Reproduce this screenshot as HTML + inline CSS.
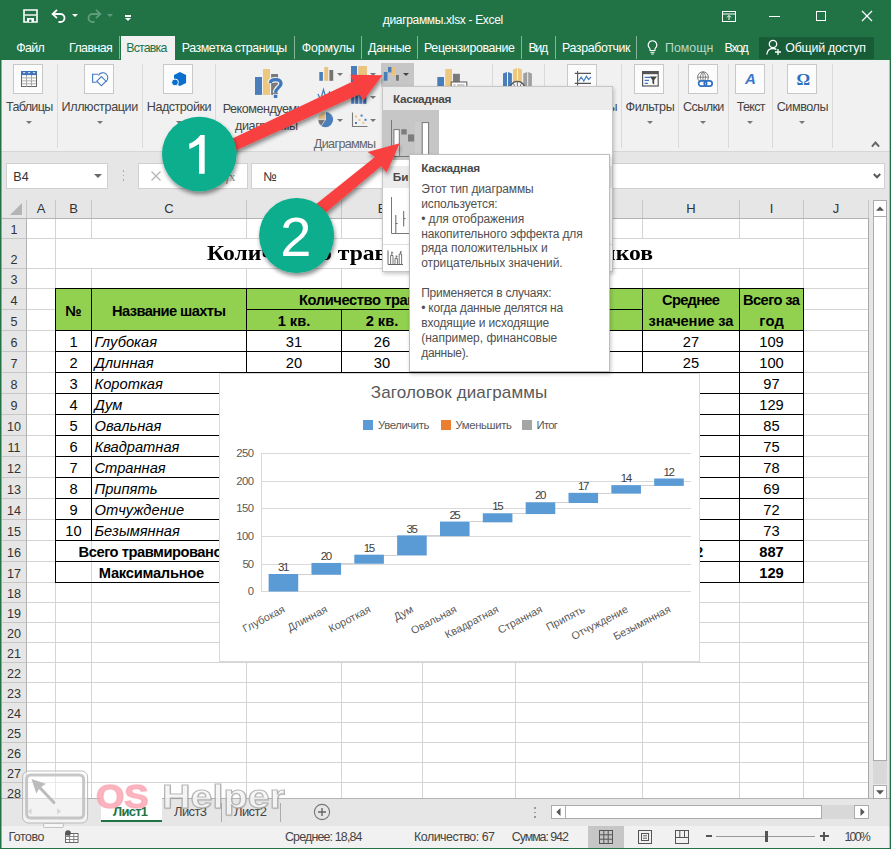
<!DOCTYPE html><html><head><meta charset='utf-8'><title>Excel</title><style>
*{box-sizing:border-box;margin:0;padding:0}
html,body{width:891px;height:849px;overflow:hidden;background:#fff}
body{font-family:"Liberation Sans",sans-serif;font-size:12px;color:#444;position:relative}
.a{position:absolute}
.t{position:absolute;white-space:nowrap;line-height:1}
.gl{position:absolute;background:#d4d4d4}
.bl{position:absolute;background:#000}
.ibox{position:absolute;width:30px;height:30px;top:64px;background:#fcfcfc;border:1px solid #c8c8c8}
.rsep{position:absolute;width:1px;top:64px;height:84px;background:#dadada}
.dd{position:absolute;width:0;height:0;border-left:3.5px solid transparent;border-right:3.5px solid transparent;border-top:3.5px solid #6a6a6a}
svg{position:absolute;overflow:visible}
</style></head><body><div class='a' style='left:0;top:152px;width:891px;height:66px;background:#e6e6e6'></div><div class='a' style='left:0;top:218px;width:891px;height:581px;background:#fff'></div><div class='a' style='left:0;top:218px;width:26px;height:581px;background:#e6e6e6'></div><div class='a' style='left:869px;top:198px;width:22px;height:601px;background:#e6e6e6'></div><div class='gl' style='left:55px;top:218px;width:1px;height:581px'></div><div class='gl' style='left:91px;top:218px;width:1px;height:581px'></div><div class='gl' style='left:246px;top:218px;width:1px;height:581px'></div><div class='gl' style='left:341px;top:218px;width:1px;height:581px'></div><div class='gl' style='left:422px;top:218px;width:1px;height:581px'></div><div class='gl' style='left:515px;top:218px;width:1px;height:581px'></div><div class='gl' style='left:642px;top:218px;width:1px;height:581px'></div><div class='gl' style='left:739px;top:218px;width:1px;height:581px'></div><div class='gl' style='left:803px;top:218px;width:1px;height:581px'></div><div class='gl' style='left:868px;top:218px;width:1px;height:581px'></div><div class='gl' style='left:26px;top:238px;width:843px;height:1px'></div><div class='gl' style='left:26px;top:268px;width:843px;height:1px'></div><div class='gl' style='left:26px;top:288px;width:843px;height:1px'></div><div class='gl' style='left:26px;top:309px;width:843px;height:1px'></div><div class='gl' style='left:26px;top:330px;width:843px;height:1px'></div><div class='gl' style='left:26px;top:351px;width:843px;height:1px'></div><div class='gl' style='left:26px;top:372px;width:843px;height:1px'></div><div class='gl' style='left:26px;top:393px;width:843px;height:1px'></div><div class='gl' style='left:26px;top:414px;width:843px;height:1px'></div><div class='gl' style='left:26px;top:435px;width:843px;height:1px'></div><div class='gl' style='left:26px;top:456px;width:843px;height:1px'></div><div class='gl' style='left:26px;top:477px;width:843px;height:1px'></div><div class='gl' style='left:26px;top:498px;width:843px;height:1px'></div><div class='gl' style='left:26px;top:519px;width:843px;height:1px'></div><div class='gl' style='left:26px;top:540px;width:843px;height:1px'></div><div class='gl' style='left:26px;top:561px;width:843px;height:1px'></div><div class='gl' style='left:26px;top:582px;width:843px;height:1px'></div><div class='gl' style='left:26px;top:602px;width:843px;height:1px'></div><div class='gl' style='left:26px;top:622px;width:843px;height:1px'></div><div class='gl' style='left:26px;top:642px;width:843px;height:1px'></div><div class='gl' style='left:26px;top:662px;width:843px;height:1px'></div><div class='gl' style='left:26px;top:682px;width:843px;height:1px'></div><div class='gl' style='left:26px;top:702px;width:843px;height:1px'></div><div class='gl' style='left:26px;top:722px;width:843px;height:1px'></div><div class='gl' style='left:26px;top:742px;width:843px;height:1px'></div><div class='gl' style='left:26px;top:762px;width:843px;height:1px'></div><div class='gl' style='left:26px;top:782px;width:843px;height:1px'></div><div class='gl' style='left:2px;top:238px;width:24px;height:1px;background:#c6c6c6'></div><div class='t' style='left:10.49px;top:224.00px;font:normal normal 12.6px "Liberation Sans",sans-serif;line-height:1;color:#333;'>1</div><div class='gl' style='left:2px;top:268px;width:24px;height:1px;background:#c6c6c6'></div><div class='t' style='left:10.49px;top:254.00px;font:normal normal 12.6px "Liberation Sans",sans-serif;line-height:1;color:#333;'>2</div><div class='gl' style='left:2px;top:288px;width:24px;height:1px;background:#c6c6c6'></div><div class='t' style='left:10.49px;top:274.00px;font:normal normal 12.6px "Liberation Sans",sans-serif;line-height:1;color:#333;'>3</div><div class='gl' style='left:2px;top:309px;width:24px;height:1px;background:#c6c6c6'></div><div class='t' style='left:10.49px;top:295.00px;font:normal normal 12.6px "Liberation Sans",sans-serif;line-height:1;color:#333;'>4</div><div class='gl' style='left:2px;top:330px;width:24px;height:1px;background:#c6c6c6'></div><div class='t' style='left:10.49px;top:316.00px;font:normal normal 12.6px "Liberation Sans",sans-serif;line-height:1;color:#333;'>5</div><div class='gl' style='left:2px;top:351px;width:24px;height:1px;background:#c6c6c6'></div><div class='t' style='left:10.49px;top:337.00px;font:normal normal 12.6px "Liberation Sans",sans-serif;line-height:1;color:#333;'>6</div><div class='gl' style='left:2px;top:372px;width:24px;height:1px;background:#c6c6c6'></div><div class='t' style='left:10.49px;top:358.00px;font:normal normal 12.6px "Liberation Sans",sans-serif;line-height:1;color:#333;'>7</div><div class='gl' style='left:2px;top:393px;width:24px;height:1px;background:#c6c6c6'></div><div class='t' style='left:10.49px;top:379.00px;font:normal normal 12.6px "Liberation Sans",sans-serif;line-height:1;color:#333;'>8</div><div class='gl' style='left:2px;top:414px;width:24px;height:1px;background:#c6c6c6'></div><div class='t' style='left:10.49px;top:400.00px;font:normal normal 12.6px "Liberation Sans",sans-serif;line-height:1;color:#333;'>9</div><div class='gl' style='left:2px;top:435px;width:24px;height:1px;background:#c6c6c6'></div><div class='t' style='left:6.99px;top:421.00px;font:normal normal 12.6px "Liberation Sans",sans-serif;line-height:1;color:#333;'>10</div><div class='gl' style='left:2px;top:456px;width:24px;height:1px;background:#c6c6c6'></div><div class='t' style='left:7.46px;top:442.00px;font:normal normal 12.6px "Liberation Sans",sans-serif;line-height:1;color:#333;'>11</div><div class='gl' style='left:2px;top:477px;width:24px;height:1px;background:#c6c6c6'></div><div class='t' style='left:6.99px;top:463.00px;font:normal normal 12.6px "Liberation Sans",sans-serif;line-height:1;color:#333;'>12</div><div class='gl' style='left:2px;top:498px;width:24px;height:1px;background:#c6c6c6'></div><div class='t' style='left:6.99px;top:484.00px;font:normal normal 12.6px "Liberation Sans",sans-serif;line-height:1;color:#333;'>13</div><div class='gl' style='left:2px;top:519px;width:24px;height:1px;background:#c6c6c6'></div><div class='t' style='left:6.99px;top:505.00px;font:normal normal 12.6px "Liberation Sans",sans-serif;line-height:1;color:#333;'>14</div><div class='gl' style='left:2px;top:540px;width:24px;height:1px;background:#c6c6c6'></div><div class='t' style='left:6.99px;top:526.00px;font:normal normal 12.6px "Liberation Sans",sans-serif;line-height:1;color:#333;'>15</div><div class='gl' style='left:2px;top:561px;width:24px;height:1px;background:#c6c6c6'></div><div class='t' style='left:6.99px;top:547.00px;font:normal normal 12.6px "Liberation Sans",sans-serif;line-height:1;color:#333;'>16</div><div class='gl' style='left:2px;top:582px;width:24px;height:1px;background:#c6c6c6'></div><div class='t' style='left:6.99px;top:568.00px;font:normal normal 12.6px "Liberation Sans",sans-serif;line-height:1;color:#333;'>17</div><div class='gl' style='left:2px;top:602px;width:24px;height:1px;background:#c6c6c6'></div><div class='t' style='left:6.99px;top:588.00px;font:normal normal 12.6px "Liberation Sans",sans-serif;line-height:1;color:#333;'>18</div><div class='gl' style='left:2px;top:622px;width:24px;height:1px;background:#c6c6c6'></div><div class='t' style='left:6.99px;top:608.00px;font:normal normal 12.6px "Liberation Sans",sans-serif;line-height:1;color:#333;'>19</div><div class='gl' style='left:2px;top:642px;width:24px;height:1px;background:#c6c6c6'></div><div class='t' style='left:6.99px;top:628.00px;font:normal normal 12.6px "Liberation Sans",sans-serif;line-height:1;color:#333;'>20</div><div class='gl' style='left:2px;top:662px;width:24px;height:1px;background:#c6c6c6'></div><div class='t' style='left:6.99px;top:648.00px;font:normal normal 12.6px "Liberation Sans",sans-serif;line-height:1;color:#333;'>21</div><div class='gl' style='left:2px;top:682px;width:24px;height:1px;background:#c6c6c6'></div><div class='t' style='left:6.99px;top:668.00px;font:normal normal 12.6px "Liberation Sans",sans-serif;line-height:1;color:#333;'>22</div><div class='gl' style='left:2px;top:702px;width:24px;height:1px;background:#c6c6c6'></div><div class='t' style='left:6.99px;top:688.00px;font:normal normal 12.6px "Liberation Sans",sans-serif;line-height:1;color:#333;'>23</div><div class='gl' style='left:2px;top:722px;width:24px;height:1px;background:#c6c6c6'></div><div class='t' style='left:6.99px;top:708.00px;font:normal normal 12.6px "Liberation Sans",sans-serif;line-height:1;color:#333;'>24</div><div class='gl' style='left:2px;top:742px;width:24px;height:1px;background:#c6c6c6'></div><div class='t' style='left:6.99px;top:728.00px;font:normal normal 12.6px "Liberation Sans",sans-serif;line-height:1;color:#333;'>25</div><div class='gl' style='left:2px;top:762px;width:24px;height:1px;background:#c6c6c6'></div><div class='t' style='left:6.99px;top:748.00px;font:normal normal 12.6px "Liberation Sans",sans-serif;line-height:1;color:#333;'>26</div><div class='gl' style='left:2px;top:782px;width:24px;height:1px;background:#c6c6c6'></div><div class='t' style='left:6.99px;top:768.00px;font:normal normal 12.6px "Liberation Sans",sans-serif;line-height:1;color:#333;'>27</div><div class='t' style='left:6.99px;top:788.00px;font:normal normal 12.6px "Liberation Sans",sans-serif;line-height:1;color:#333;'>28</div><div class='a' style='left:26px;top:218px;width:1px;height:581px;background:#b4b4b4'></div><div class='a' style='left:2px;top:218px;width:867px;height:1px;background:#b4b4b4'></div><div class='t' style='left:36.66px;top:202.00px;font:normal normal 13px "Liberation Sans",sans-serif;line-height:1;color:#333;'>A</div><div class='a' style='left:55px;top:200px;width:1px;height:18px;background:#c6c6c6'></div><div class='t' style='left:69.16px;top:202.00px;font:normal normal 13px "Liberation Sans",sans-serif;line-height:1;color:#333;'>B</div><div class='a' style='left:91px;top:200px;width:1px;height:18px;background:#c6c6c6'></div><div class='t' style='left:164.30px;top:202.00px;font:normal normal 13px "Liberation Sans",sans-serif;line-height:1;color:#333;'>C</div><div class='a' style='left:246px;top:200px;width:1px;height:18px;background:#c6c6c6'></div><div class='t' style='left:289.30px;top:202.00px;font:normal normal 13px "Liberation Sans",sans-serif;line-height:1;color:#333;'>D</div><div class='a' style='left:341px;top:200px;width:1px;height:18px;background:#c6c6c6'></div><div class='t' style='left:377.66px;top:202.00px;font:normal normal 13px "Liberation Sans",sans-serif;line-height:1;color:#333;'>E</div><div class='a' style='left:422px;top:200px;width:1px;height:18px;background:#c6c6c6'></div><div class='t' style='left:465.02px;top:202.00px;font:normal normal 13px "Liberation Sans",sans-serif;line-height:1;color:#333;'>F</div><div class='a' style='left:515px;top:200px;width:1px;height:18px;background:#c6c6c6'></div><div class='t' style='left:573.94px;top:202.00px;font:normal normal 13px "Liberation Sans",sans-serif;line-height:1;color:#333;'>G</div><div class='a' style='left:642px;top:200px;width:1px;height:18px;background:#c6c6c6'></div><div class='t' style='left:686.30px;top:202.00px;font:normal normal 13px "Liberation Sans",sans-serif;line-height:1;color:#333;'>H</div><div class='a' style='left:739px;top:200px;width:1px;height:18px;background:#c6c6c6'></div><div class='t' style='left:769.69px;top:202.00px;font:normal normal 13px "Liberation Sans",sans-serif;line-height:1;color:#333;'>I</div><div class='a' style='left:803px;top:200px;width:1px;height:18px;background:#c6c6c6'></div><div class='t' style='left:832.75px;top:202.00px;font:normal normal 13px "Liberation Sans",sans-serif;line-height:1;color:#333;'>J</div><div class='a' style='left:868px;top:200px;width:1px;height:18px;background:#c6c6c6'></div><div class='a' style='left:26px;top:200px;width:1px;height:18px;background:#c6c6c6'></div><svg style='left:9px;top:203px' width='14' height='13'><path d='M13 0V12H1Z' fill='#b4b4b4'/></svg><div class='a' style='left:56px;top:239px;width:747px;height:29px;background:#fff'></div><div class='a' style='left:868px;top:218px;width:1px;height:581px;background:#a8a8a8'></div><div class='a' style='left:55px;top:288px;width:748px;height:42px;background:#92d050'></div><div class='bl' style='left:55px;top:288px;width:749px;height:1px'></div><div class='bl' style='left:246px;top:309px;width:397px;height:1px'></div><div class='bl' style='left:55px;top:330px;width:749px;height:1px'></div><div class='bl' style='left:55px;top:351px;width:749px;height:1px'></div><div class='bl' style='left:55px;top:372px;width:749px;height:1px'></div><div class='bl' style='left:55px;top:393px;width:749px;height:1px'></div><div class='bl' style='left:55px;top:414px;width:749px;height:1px'></div><div class='bl' style='left:55px;top:435px;width:749px;height:1px'></div><div class='bl' style='left:55px;top:456px;width:749px;height:1px'></div><div class='bl' style='left:55px;top:477px;width:749px;height:1px'></div><div class='bl' style='left:55px;top:498px;width:749px;height:1px'></div><div class='bl' style='left:55px;top:519px;width:749px;height:1px'></div><div class='bl' style='left:55px;top:540px;width:749px;height:1px'></div><div class='bl' style='left:55px;top:561px;width:749px;height:1px'></div><div class='bl' style='left:55px;top:582px;width:749px;height:1px'></div><div class='bl' style='left:55px;top:288px;width:1px;height:295px'></div><div class='bl' style='left:91px;top:288px;width:1px;height:253px'></div><div class='bl' style='left:246px;top:288px;width:1px;height:295px'></div><div class='bl' style='left:341px;top:309px;width:1px;height:274px'></div><div class='bl' style='left:422px;top:309px;width:1px;height:274px'></div><div class='bl' style='left:515px;top:309px;width:1px;height:274px'></div><div class='bl' style='left:642px;top:288px;width:1px;height:295px'></div><div class='bl' style='left:739px;top:288px;width:1px;height:295px'></div><div class='bl' style='left:803px;top:288px;width:1px;height:295px'></div><div class='t' style='left:65.31px;top:304.00px;font:normal bold 14.7px "Liberation Sans",sans-serif;line-height:1;color:#000;'>№</div><div class='t' style='left:112.00px;top:304.00px;font:normal bold 14.7px "Liberation Sans",sans-serif;line-height:1;color:#000;letter-spacing:-0.595px;'>Название шахты</div><div class='t' style='left:299.00px;top:293.00px;font:normal bold 14.7px "Liberation Sans",sans-serif;line-height:1;color:#000;letter-spacing:-0.408px;'>Количество травмированных работников</div><div class='t' style='left:277.64px;top:314.00px;font:normal bold 14.7px "Liberation Sans",sans-serif;line-height:1;color:#000;'>1 кв.</div><div class='t' style='left:365.64px;top:314.00px;font:normal bold 14.7px "Liberation Sans",sans-serif;line-height:1;color:#000;'>2 кв.</div><div class='t' style='left:452.64px;top:314.00px;font:normal bold 14.7px "Liberation Sans",sans-serif;line-height:1;color:#000;'>3 кв.</div><div class='t' style='left:562.64px;top:314.00px;font:normal bold 14.7px "Liberation Sans",sans-serif;line-height:1;color:#000;'>4 кв.</div><div class='t' style='left:662.00px;top:293.00px;font:normal bold 14.7px "Liberation Sans",sans-serif;line-height:1;color:#000;letter-spacing:-0.714px;'>Среднее</div><div class='t' style='left:648.50px;top:314.00px;font:normal bold 14.7px "Liberation Sans",sans-serif;line-height:1;color:#000;letter-spacing:-0.111px;'>значение за</div><div class='t' style='left:743.00px;top:293.00px;font:normal bold 14.7px "Liberation Sans",sans-serif;line-height:1;color:#000;letter-spacing:-0.600px;'>Всего за</div><div class='t' style='left:759.25px;top:314.00px;font:normal bold 14.7px "Liberation Sans",sans-serif;line-height:1;color:#000;letter-spacing:0.234px;'>год</div><div class='t' style='left:69.41px;top:335.00px;font:normal normal 14.7px "Liberation Sans",sans-serif;line-height:1;color:#000;'>1</div><div class='t' style='left:94.50px;top:335.00px;font:italic normal 14.7px "Liberation Sans",sans-serif;line-height:1;color:#000;'>Глубокая</div><div class='t' style='left:285.83px;top:335.00px;font:normal normal 14.7px "Liberation Sans",sans-serif;line-height:1;color:#000;'>31</div><div class='t' style='left:373.83px;top:335.00px;font:normal normal 14.7px "Liberation Sans",sans-serif;line-height:1;color:#000;'>26</div><div class='t' style='left:460.83px;top:335.00px;font:normal normal 14.7px "Liberation Sans",sans-serif;line-height:1;color:#000;'>25</div><div class='t' style='left:570.83px;top:335.00px;font:normal normal 14.7px "Liberation Sans",sans-serif;line-height:1;color:#000;'>27</div><div class='t' style='left:682.83px;top:335.00px;font:normal normal 14.7px "Liberation Sans",sans-serif;line-height:1;color:#000;'>27</div><div class='t' style='left:759.24px;top:335.00px;font:normal normal 14.7px "Liberation Sans",sans-serif;line-height:1;color:#000;'>109</div><div class='t' style='left:69.41px;top:356.00px;font:normal normal 14.7px "Liberation Sans",sans-serif;line-height:1;color:#000;'>2</div><div class='t' style='left:94.50px;top:356.00px;font:italic normal 14.7px "Liberation Sans",sans-serif;line-height:1;color:#000;'>Длинная</div><div class='t' style='left:285.83px;top:356.00px;font:normal normal 14.7px "Liberation Sans",sans-serif;line-height:1;color:#000;'>20</div><div class='t' style='left:373.83px;top:356.00px;font:normal normal 14.7px "Liberation Sans",sans-serif;line-height:1;color:#000;'>30</div><div class='t' style='left:460.83px;top:356.00px;font:normal normal 14.7px "Liberation Sans",sans-serif;line-height:1;color:#000;'>22</div><div class='t' style='left:570.83px;top:356.00px;font:normal normal 14.7px "Liberation Sans",sans-serif;line-height:1;color:#000;'>28</div><div class='t' style='left:682.83px;top:356.00px;font:normal normal 14.7px "Liberation Sans",sans-serif;line-height:1;color:#000;'>25</div><div class='t' style='left:759.24px;top:356.00px;font:normal normal 14.7px "Liberation Sans",sans-serif;line-height:1;color:#000;'>100</div><div class='t' style='left:69.41px;top:377.00px;font:normal normal 14.7px "Liberation Sans",sans-serif;line-height:1;color:#000;'>3</div><div class='t' style='left:94.50px;top:377.00px;font:italic normal 14.7px "Liberation Sans",sans-serif;line-height:1;color:#000;'>Короткая</div><div class='t' style='left:285.83px;top:377.00px;font:normal normal 14.7px "Liberation Sans",sans-serif;line-height:1;color:#000;'>15</div><div class='t' style='left:373.83px;top:377.00px;font:normal normal 14.7px "Liberation Sans",sans-serif;line-height:1;color:#000;'>28</div><div class='t' style='left:460.83px;top:377.00px;font:normal normal 14.7px "Liberation Sans",sans-serif;line-height:1;color:#000;'>26</div><div class='t' style='left:570.83px;top:377.00px;font:normal normal 14.7px "Liberation Sans",sans-serif;line-height:1;color:#000;'>28</div><div class='t' style='left:682.83px;top:377.00px;font:normal normal 14.7px "Liberation Sans",sans-serif;line-height:1;color:#000;'>24</div><div class='t' style='left:763.33px;top:377.00px;font:normal normal 14.7px "Liberation Sans",sans-serif;line-height:1;color:#000;'>97</div><div class='t' style='left:69.41px;top:398.00px;font:normal normal 14.7px "Liberation Sans",sans-serif;line-height:1;color:#000;'>4</div><div class='t' style='left:94.50px;top:398.00px;font:italic normal 14.7px "Liberation Sans",sans-serif;line-height:1;color:#000;'>Дум</div><div class='t' style='left:285.83px;top:398.00px;font:normal normal 14.7px "Liberation Sans",sans-serif;line-height:1;color:#000;'>35</div><div class='t' style='left:373.83px;top:398.00px;font:normal normal 14.7px "Liberation Sans",sans-serif;line-height:1;color:#000;'>30</div><div class='t' style='left:460.83px;top:398.00px;font:normal normal 14.7px "Liberation Sans",sans-serif;line-height:1;color:#000;'>32</div><div class='t' style='left:570.83px;top:398.00px;font:normal normal 14.7px "Liberation Sans",sans-serif;line-height:1;color:#000;'>32</div><div class='t' style='left:682.83px;top:398.00px;font:normal normal 14.7px "Liberation Sans",sans-serif;line-height:1;color:#000;'>32</div><div class='t' style='left:759.24px;top:398.00px;font:normal normal 14.7px "Liberation Sans",sans-serif;line-height:1;color:#000;'>129</div><div class='t' style='left:69.41px;top:419.00px;font:normal normal 14.7px "Liberation Sans",sans-serif;line-height:1;color:#000;'>5</div><div class='t' style='left:94.50px;top:419.00px;font:italic normal 14.7px "Liberation Sans",sans-serif;line-height:1;color:#000;'>Овальная</div><div class='t' style='left:285.83px;top:419.00px;font:normal normal 14.7px "Liberation Sans",sans-serif;line-height:1;color:#000;'>25</div><div class='t' style='left:373.83px;top:419.00px;font:normal normal 14.7px "Liberation Sans",sans-serif;line-height:1;color:#000;'>20</div><div class='t' style='left:460.83px;top:419.00px;font:normal normal 14.7px "Liberation Sans",sans-serif;line-height:1;color:#000;'>19</div><div class='t' style='left:570.83px;top:419.00px;font:normal normal 14.7px "Liberation Sans",sans-serif;line-height:1;color:#000;'>21</div><div class='t' style='left:682.83px;top:419.00px;font:normal normal 14.7px "Liberation Sans",sans-serif;line-height:1;color:#000;'>21</div><div class='t' style='left:763.33px;top:419.00px;font:normal normal 14.7px "Liberation Sans",sans-serif;line-height:1;color:#000;'>85</div><div class='t' style='left:69.41px;top:440.00px;font:normal normal 14.7px "Liberation Sans",sans-serif;line-height:1;color:#000;'>6</div><div class='t' style='left:94.50px;top:440.00px;font:italic normal 14.7px "Liberation Sans",sans-serif;line-height:1;color:#000;'>Квадратная</div><div class='t' style='left:285.83px;top:440.00px;font:normal normal 14.7px "Liberation Sans",sans-serif;line-height:1;color:#000;'>15</div><div class='t' style='left:373.83px;top:440.00px;font:normal normal 14.7px "Liberation Sans",sans-serif;line-height:1;color:#000;'>20</div><div class='t' style='left:460.83px;top:440.00px;font:normal normal 14.7px "Liberation Sans",sans-serif;line-height:1;color:#000;'>22</div><div class='t' style='left:570.83px;top:440.00px;font:normal normal 14.7px "Liberation Sans",sans-serif;line-height:1;color:#000;'>18</div><div class='t' style='left:682.83px;top:440.00px;font:normal normal 14.7px "Liberation Sans",sans-serif;line-height:1;color:#000;'>19</div><div class='t' style='left:763.33px;top:440.00px;font:normal normal 14.7px "Liberation Sans",sans-serif;line-height:1;color:#000;'>75</div><div class='t' style='left:69.41px;top:461.00px;font:normal normal 14.7px "Liberation Sans",sans-serif;line-height:1;color:#000;'>7</div><div class='t' style='left:94.50px;top:461.00px;font:italic normal 14.7px "Liberation Sans",sans-serif;line-height:1;color:#000;'>Странная</div><div class='t' style='left:285.83px;top:461.00px;font:normal normal 14.7px "Liberation Sans",sans-serif;line-height:1;color:#000;'>20</div><div class='t' style='left:373.83px;top:461.00px;font:normal normal 14.7px "Liberation Sans",sans-serif;line-height:1;color:#000;'>18</div><div class='t' style='left:460.83px;top:461.00px;font:normal normal 14.7px "Liberation Sans",sans-serif;line-height:1;color:#000;'>21</div><div class='t' style='left:570.83px;top:461.00px;font:normal normal 14.7px "Liberation Sans",sans-serif;line-height:1;color:#000;'>19</div><div class='t' style='left:682.83px;top:461.00px;font:normal normal 14.7px "Liberation Sans",sans-serif;line-height:1;color:#000;'>20</div><div class='t' style='left:763.33px;top:461.00px;font:normal normal 14.7px "Liberation Sans",sans-serif;line-height:1;color:#000;'>78</div><div class='t' style='left:69.41px;top:482.00px;font:normal normal 14.7px "Liberation Sans",sans-serif;line-height:1;color:#000;'>8</div><div class='t' style='left:94.50px;top:482.00px;font:italic normal 14.7px "Liberation Sans",sans-serif;line-height:1;color:#000;'>Припять</div><div class='t' style='left:285.83px;top:482.00px;font:normal normal 14.7px "Liberation Sans",sans-serif;line-height:1;color:#000;'>17</div><div class='t' style='left:373.83px;top:482.00px;font:normal normal 14.7px "Liberation Sans",sans-serif;line-height:1;color:#000;'>16</div><div class='t' style='left:460.83px;top:482.00px;font:normal normal 14.7px "Liberation Sans",sans-serif;line-height:1;color:#000;'>18</div><div class='t' style='left:570.83px;top:482.00px;font:normal normal 14.7px "Liberation Sans",sans-serif;line-height:1;color:#000;'>18</div><div class='t' style='left:682.83px;top:482.00px;font:normal normal 14.7px "Liberation Sans",sans-serif;line-height:1;color:#000;'>17</div><div class='t' style='left:763.33px;top:482.00px;font:normal normal 14.7px "Liberation Sans",sans-serif;line-height:1;color:#000;'>69</div><div class='t' style='left:69.41px;top:503.00px;font:normal normal 14.7px "Liberation Sans",sans-serif;line-height:1;color:#000;'>9</div><div class='t' style='left:94.50px;top:503.00px;font:italic normal 14.7px "Liberation Sans",sans-serif;line-height:1;color:#000;'>Отчуждение</div><div class='t' style='left:285.83px;top:503.00px;font:normal normal 14.7px "Liberation Sans",sans-serif;line-height:1;color:#000;'>14</div><div class='t' style='left:373.83px;top:503.00px;font:normal normal 14.7px "Liberation Sans",sans-serif;line-height:1;color:#000;'>20</div><div class='t' style='left:460.83px;top:503.00px;font:normal normal 14.7px "Liberation Sans",sans-serif;line-height:1;color:#000;'>19</div><div class='t' style='left:570.83px;top:503.00px;font:normal normal 14.7px "Liberation Sans",sans-serif;line-height:1;color:#000;'>19</div><div class='t' style='left:682.83px;top:503.00px;font:normal normal 14.7px "Liberation Sans",sans-serif;line-height:1;color:#000;'>18</div><div class='t' style='left:763.33px;top:503.00px;font:normal normal 14.7px "Liberation Sans",sans-serif;line-height:1;color:#000;'>72</div><div class='t' style='left:65.33px;top:524.00px;font:normal normal 14.7px "Liberation Sans",sans-serif;line-height:1;color:#000;'>10</div><div class='t' style='left:94.50px;top:524.00px;font:italic normal 14.7px "Liberation Sans",sans-serif;line-height:1;color:#000;'>Безымянная</div><div class='t' style='left:285.83px;top:524.00px;font:normal normal 14.7px "Liberation Sans",sans-serif;line-height:1;color:#000;'>12</div><div class='t' style='left:373.83px;top:524.00px;font:normal normal 14.7px "Liberation Sans",sans-serif;line-height:1;color:#000;'>21</div><div class='t' style='left:460.83px;top:524.00px;font:normal normal 14.7px "Liberation Sans",sans-serif;line-height:1;color:#000;'>20</div><div class='t' style='left:570.83px;top:524.00px;font:normal normal 14.7px "Liberation Sans",sans-serif;line-height:1;color:#000;'>20</div><div class='t' style='left:682.83px;top:524.00px;font:normal normal 14.7px "Liberation Sans",sans-serif;line-height:1;color:#000;'>18</div><div class='t' style='left:763.33px;top:524.00px;font:normal normal 14.7px "Liberation Sans",sans-serif;line-height:1;color:#000;'>73</div><div class='t' style='left:78.60px;top:545.00px;font:normal bold 14.7px "Liberation Sans",sans-serif;line-height:1;color:#000;letter-spacing:-0.469px;'>Всего травмировано</div><div class='t' style='left:98.75px;top:566.00px;font:normal bold 14.7px "Liberation Sans",sans-serif;line-height:1;color:#000;letter-spacing:-0.241px;'>Максимальное</div><div class='t' style='left:678.74px;top:545.00px;font:normal bold 14.7px "Liberation Sans",sans-serif;line-height:1;color:#000;'>222</div><div class='t' style='left:759.24px;top:545.00px;font:normal bold 14.7px "Liberation Sans",sans-serif;line-height:1;color:#000;'>887</div><div class='t' style='left:759.24px;top:566.00px;font:normal bold 14.7px "Liberation Sans",sans-serif;line-height:1;color:#000;'>129</div><div class='t' style='left:206.50px;top:243.00px;font:normal bold 21.5px "Liberation Serif",serif;line-height:1;color:#000;transform-origin:0 0;transform:scaleX(1.0985);'>Количество травмированных работников</div><div class='a' style='left:219px;top:373px;width:481px;height:289px;background:#fff;border:1px solid #d9d9d9'></div><div class='t' style='left:370.75px;top:384.00px;font:normal normal 17px "Liberation Sans",sans-serif;line-height:1;color:#595959;letter-spacing:0.126px;'>Заголовок диаграммы</div><div class='a' style='left:363px;top:420px;width:10px;height:10px;background:#5b9bd5'></div><div class='t' style='left:378.00px;top:420.00px;font:normal normal 11.3px "Liberation Sans",sans-serif;line-height:1;color:#595959;letter-spacing:-0.373px;'>Увеличить</div><div class='a' style='left:440.5px;top:420px;width:10px;height:10px;background:#ed7d31'></div><div class='t' style='left:455.50px;top:420.00px;font:normal normal 11.3px "Liberation Sans",sans-serif;line-height:1;color:#595959;letter-spacing:-0.348px;'>Уменьшить</div><div class='a' style='left:521.5px;top:420px;width:10px;height:10px;background:#a5a5a5'></div><div class='t' style='left:536.50px;top:420.00px;font:normal normal 11.3px "Liberation Sans",sans-serif;line-height:1;color:#595959;letter-spacing:-0.693px;'>Итог</div><div class='a' style='left:262px;top:591px;width:429px;height:1px;background:#d9d9d9'></div><div class='t' style='left:247.70px;top:586.00px;font:normal normal 11.3px "Liberation Sans",sans-serif;line-height:1;color:#595959;'>0</div><div class='a' style='left:262px;top:564px;width:429px;height:1px;background:#d9d9d9'></div><div class='t' style='left:242.40px;top:559.00px;font:normal normal 11.3px "Liberation Sans",sans-serif;line-height:1;color:#595959;letter-spacing:-0.978px;'>50</div><div class='a' style='left:262px;top:536px;width:429px;height:1px;background:#d9d9d9'></div><div class='t' style='left:236.30px;top:531.00px;font:normal normal 11.3px "Liberation Sans",sans-serif;line-height:1;color:#595959;letter-spacing:-0.580px;'>100</div><div class='a' style='left:262px;top:508px;width:429px;height:1px;background:#d9d9d9'></div><div class='t' style='left:236.30px;top:503.00px;font:normal normal 11.3px "Liberation Sans",sans-serif;line-height:1;color:#595959;letter-spacing:-0.580px;'>150</div><div class='a' style='left:262px;top:481px;width:429px;height:1px;background:#d9d9d9'></div><div class='t' style='left:236.30px;top:476.00px;font:normal normal 11.3px "Liberation Sans",sans-serif;line-height:1;color:#595959;letter-spacing:-0.580px;'>200</div><div class='a' style='left:262px;top:453px;width:429px;height:1px;background:#d9d9d9'></div><div class='t' style='left:236.30px;top:448.00px;font:normal normal 11.3px "Liberation Sans",sans-serif;line-height:1;color:#595959;letter-spacing:-0.580px;'>250</div><div class='a' style='left:261px;top:453px;width:1px;height:139px;background:#d9d9d9'></div><svg style='left:0;top:0' width='891' height='849'><rect x='268.62' y='573.99' width='29.60' height='17.51' fill='#5b9bd5'/></svg><div class='t' style='left:278.02px;top:562.00px;font:normal normal 11.5px "Liberation Sans",sans-serif;line-height:1;color:#404040;letter-spacing:-1.397px;'>31</div><div class='t' style='left:237.96px;top:603.00px;font:normal normal 10.8px "Liberation Sans",sans-serif;line-height:1;color:#595959;transform-origin:46.06px 5.25px;transform:rotate(-27.5deg);'>Глубокая</div><div class='a' style='left:298.2px;top:573.9px;width:13.2px;height:1px;background:#d0d0d0'></div><svg style='left:0;top:0' width='891' height='849'><rect x='311.46' y='562.95' width='29.60' height='11.84' fill='#5b9bd5'/></svg><div class='t' style='left:320.86px;top:551.00px;font:normal normal 11.5px "Liberation Sans",sans-serif;line-height:1;color:#404040;letter-spacing:-1.397px;'>20</div><div class='t' style='left:283.44px;top:603.00px;font:normal normal 10.8px "Liberation Sans",sans-serif;line-height:1;color:#595959;transform-origin:43.42px 5.25px;transform:rotate(-27.5deg);'>Длинная</div><div class='a' style='left:341.1px;top:562.8px;width:13.2px;height:1px;background:#d0d0d0'></div><svg style='left:0;top:0' width='891' height='849'><rect x='354.30' y='554.67' width='29.60' height='9.08' fill='#5b9bd5'/></svg><div class='t' style='left:363.70px;top:543.00px;font:normal normal 11.5px "Liberation Sans",sans-serif;line-height:1;color:#404040;letter-spacing:-1.397px;'>15</div><div class='t' style='left:323.87px;top:603.00px;font:normal normal 10.8px "Liberation Sans",sans-serif;line-height:1;color:#595959;transform-origin:45.83px 5.25px;transform:rotate(-27.5deg);'>Короткая</div><div class='a' style='left:383.9px;top:554.6px;width:13.2px;height:1px;background:#d0d0d0'></div><svg style='left:0;top:0' width='891' height='849'><rect x='397.14' y='535.35' width='29.60' height='20.12' fill='#5b9bd5'/></svg><div class='t' style='left:406.54px;top:524.00px;font:normal normal 11.5px "Liberation Sans",sans-serif;line-height:1;color:#404040;letter-spacing:-1.397px;'>35</div><div class='t' style='left:392.29px;top:603.00px;font:normal normal 10.8px "Liberation Sans",sans-serif;line-height:1;color:#595959;transform-origin:20.25px 5.25px;transform:rotate(-27.5deg);'>Дум</div><div class='a' style='left:426.7px;top:535.2px;width:13.2px;height:1px;background:#d0d0d0'></div><svg style='left:0;top:0' width='891' height='849'><rect x='439.98' y='521.55' width='29.60' height='14.60' fill='#5b9bd5'/></svg><div class='t' style='left:449.38px;top:510.00px;font:normal normal 11.5px "Liberation Sans",sans-serif;line-height:1;color:#404040;letter-spacing:-1.397px;'>25</div><div class='t' style='left:405.61px;top:603.00px;font:normal normal 10.8px "Liberation Sans",sans-serif;line-height:1;color:#595959;transform-origin:49.77px 5.25px;transform:rotate(-27.5deg);'>Овальная</div><div class='a' style='left:469.6px;top:521.4px;width:13.2px;height:1px;background:#d0d0d0'></div><svg style='left:0;top:0' width='891' height='849'><rect x='482.82' y='513.27' width='29.60' height='9.08' fill='#5b9bd5'/></svg><div class='t' style='left:492.22px;top:501.00px;font:normal normal 11.5px "Liberation Sans",sans-serif;line-height:1;color:#404040;letter-spacing:-1.397px;'>15</div><div class='t' style='left:439.47px;top:603.00px;font:normal normal 10.8px "Liberation Sans",sans-serif;line-height:1;color:#595959;transform-origin:58.75px 5.25px;transform:rotate(-27.5deg);'>Квадратная</div><div class='a' style='left:512.4px;top:513.2px;width:13.2px;height:1px;background:#d0d0d0'></div><svg style='left:0;top:0' width='891' height='849'><rect x='525.66' y='502.23' width='29.60' height='11.84' fill='#5b9bd5'/></svg><div class='t' style='left:535.06px;top:490.00px;font:normal normal 11.5px "Liberation Sans",sans-serif;line-height:1;color:#404040;letter-spacing:-1.397px;'>20</div><div class='t' style='left:492.53px;top:603.00px;font:normal normal 10.8px "Liberation Sans",sans-serif;line-height:1;color:#595959;transform-origin:48.53px 5.25px;transform:rotate(-27.5deg);'>Странная</div><div class='a' style='left:555.3px;top:502.1px;width:13.2px;height:1px;background:#d0d0d0'></div><svg style='left:0;top:0' width='891' height='849'><rect x='568.50' y='492.84' width='29.60' height='10.18' fill='#5b9bd5'/></svg><div class='t' style='left:577.90px;top:481.00px;font:normal normal 11.5px "Liberation Sans",sans-serif;line-height:1;color:#404040;letter-spacing:-1.397px;'>17</div><div class='t' style='left:541.84px;top:603.00px;font:normal normal 10.8px "Liberation Sans",sans-serif;line-height:1;color:#595959;transform-origin:42.06px 5.25px;transform:rotate(-27.5deg);'>Припять</div><div class='a' style='left:598.1px;top:492.7px;width:13.2px;height:1px;background:#d0d0d0'></div><svg style='left:0;top:0' width='891' height='849'><rect x='611.34' y='485.12' width='29.60' height='8.53' fill='#5b9bd5'/></svg><div class='t' style='left:620.74px;top:473.00px;font:normal normal 11.5px "Liberation Sans",sans-serif;line-height:1;color:#404040;letter-spacing:-1.397px;'>14</div><div class='t' style='left:564.72px;top:603.00px;font:normal normal 10.8px "Liberation Sans",sans-serif;line-height:1;color:#595959;transform-origin:62.02px 5.25px;transform:rotate(-27.5deg);'>Отчуждение</div><div class='a' style='left:640.9px;top:485.0px;width:13.2px;height:1px;background:#d0d0d0'></div><svg style='left:0;top:0' width='891' height='849'><rect x='654.18' y='478.49' width='29.60' height='7.42' fill='#5b9bd5'/></svg><div class='t' style='left:663.58px;top:467.00px;font:normal normal 11.5px "Liberation Sans",sans-serif;line-height:1;color:#404040;letter-spacing:-1.397px;'>12</div><div class='t' style='left:606.97px;top:603.00px;font:normal normal 10.8px "Liberation Sans",sans-serif;line-height:1;color:#595959;transform-origin:62.61px 5.25px;transform:rotate(-27.5deg);'>Безымянная</div><div class='a' style='left:0;top:0;width:891px;height:60px;background:#217346'></div><div class='a' style='left:121px;top:36px;width:54px;height:25px;background:#f1f1f1'></div><svg style='left:23px;top:9px' width='15' height='14' viewBox='0 0 15 14'><path d='M1 1H14V13H1Z' fill='none' stroke='#fff' stroke-width='1.6'/><path d='M1.5 6H13.5' stroke='#fff' stroke-width='1.4'/><rect x='4' y='9' width='7' height='4' fill='#fff'/><rect x='6.2' y='10.6' width='2.2' height='2.4' fill='#217346'/></svg><svg style='left:51px;top:9px' width='16' height='14' viewBox='0 0 16 14'><path d='M2 5H9.5A4 4 0 0 1 9.5 13H7.5' fill='none' stroke='#fff' stroke-width='1.8'/><path d='M6 0.8L1.6 5L6 9.2' fill='none' stroke='#fff' stroke-width='1.8'/></svg><div class='dd' style='left:72px;top:14px;border-top-color:#fff;border-left-width:3px;border-right-width:3px'></div><svg style='left:86px;top:9px' width='16' height='14' viewBox='0 0 16 14'><path d='M14 5H6.5A4 4 0 0 0 6.5 13H8.5' fill='none' stroke='#5f9c7c' stroke-width='1.8'/><path d='M10 0.8L14.4 5L10 9.2' fill='none' stroke='#5f9c7c' stroke-width='1.8'/></svg><div class='dd' style='left:107px;top:14px;border-top-color:#5f9c7c;border-left-width:3px;border-right-width:3px'></div><div class='a' style='left:125px;top:15px;width:6px;height:1.5px;background:#fff'></div><div class='dd' style='left:125px;top:18px;border-top-color:#fff;border-left-width:3px;border-right-width:3px'></div><div class='t' style='left:382.75px;top:14.00px;font:normal normal 12px "Liberation Sans",sans-serif;line-height:1;color:#fff;letter-spacing:-0.321px;'>диаграммы.xlsx - Excel</div><svg style='left:722px;top:11px' width='14' height='11' viewBox='0 0 14 11'><rect x='0.5' y='0.5' width='13' height='10' fill='none' stroke='#fff' stroke-width='1'/><path d='M0.5 3H13.5' stroke='#fff'/><path d='M7 9V4.6M5 6.4L7 4.4L9 6.4' fill='none' stroke='#fff'/></svg><div class='a' style='left:769px;top:15.5px;width:11px;height:1.3px;background:#fff'></div><div class='a' style='left:816px;top:11px;width:10px;height:10px;border:1.3px solid #fff'></div><svg style='left:862px;top:11px' width='10' height='10' viewBox='0 0 10 10'><path d='M0 0L10 10M10 0L0 10' stroke='#fff' stroke-width='1.3'/></svg><div class='t' style='left:16.20px;top:42.00px;font:normal normal 12.4px "Liberation Sans",sans-serif;line-height:1;color:#fff;letter-spacing:-0.623px;'>Файл</div><div class='t' style='left:69.00px;top:42.00px;font:normal normal 12.4px "Liberation Sans",sans-serif;line-height:1;color:#fff;letter-spacing:-0.562px;'>Главная</div><div class='t' style='left:126.30px;top:42.00px;font:normal normal 12.4px "Liberation Sans",sans-serif;line-height:1;color:#217346;letter-spacing:-0.844px;'>Вставка</div><div class='t' style='left:181.80px;top:42.00px;font:normal normal 12.4px "Liberation Sans",sans-serif;line-height:1;color:#fff;letter-spacing:-0.438px;'>Разметка страницы</div><div class='t' style='left:301.80px;top:42.00px;font:normal normal 12.4px "Liberation Sans",sans-serif;line-height:1;color:#fff;letter-spacing:-0.187px;'>Формулы</div><div class='t' style='left:368.10px;top:42.00px;font:normal normal 12.4px "Liberation Sans",sans-serif;line-height:1;color:#fff;letter-spacing:-0.333px;'>Данные</div><div class='t' style='left:424.00px;top:42.00px;font:normal normal 12.4px "Liberation Sans",sans-serif;line-height:1;color:#fff;letter-spacing:-0.361px;'>Рецензирование</div><div class='t' style='left:528.40px;top:42.00px;font:normal normal 12.4px "Liberation Sans",sans-serif;line-height:1;color:#fff;letter-spacing:-1.311px;'>Вид</div><div class='t' style='left:562.00px;top:42.00px;font:normal normal 12.4px "Liberation Sans",sans-serif;line-height:1;color:#fff;letter-spacing:-0.377px;'>Разработчик</div><div class='a' style='left:294px;top:36px;width:1px;height:23px;background:#86b49b'></div><div class='a' style='left:361px;top:36px;width:1px;height:23px;background:#86b49b'></div><div class='a' style='left:417px;top:36px;width:1px;height:23px;background:#86b49b'></div><div class='a' style='left:521px;top:36px;width:1px;height:23px;background:#86b49b'></div><div class='a' style='left:555px;top:36px;width:1px;height:23px;background:#86b49b'></div><div class='a' style='left:636px;top:36px;width:1px;height:23px;background:#86b49b'></div><div class='a' style='left:119px;top:36px;width:1px;height:23px;background:#86b49b'></div><svg style='left:647px;top:40px' width='11' height='15' viewBox='0 0 11 15'><path d='M5.5 0.8A4.3 4.3 0 0 1 8 8.6V10.5H3V8.6A4.3 4.3 0 0 1 5.5 0.8Z' fill='none' stroke='#fff' stroke-width='1.1'/><path d='M3.4 12.3H7.6M4.2 14H6.8' stroke='#fff' stroke-width='1'/></svg><div class='t' style='left:665.00px;top:42.00px;font:normal normal 12.4px "Liberation Sans",sans-serif;line-height:1;color:#bcd9c8;letter-spacing:0.010px;'>Помощн</div><div class='t' style='left:724.50px;top:42.00px;font:normal normal 12.4px "Liberation Sans",sans-serif;line-height:1;color:#fff;letter-spacing:-1.244px;'>Вход</div><div class='a' style='left:759px;top:37px;width:115px;height:22px;background:#185c37'></div><svg style='left:766px;top:39px' width='16' height='17' viewBox='0 0 16 17'><circle cx='7' cy='5' r='3.7' fill='none' stroke='#fff' stroke-width='1.3'/><path d='M0.8 15.5C1.2 11.5 3.5 9.5 7 9.5C8.5 9.5 9.6 9.9 10.4 10.5' fill='none' stroke='#fff' stroke-width='1.3'/><path d='M12 10V16M9 13H15' stroke='#fff' stroke-width='1.3'/></svg><div class='t' style='left:785.30px;top:42.00px;font:normal normal 12.4px "Liberation Sans",sans-serif;line-height:1;color:#fff;letter-spacing:-0.232px;'>Общий доступ</div><div class='a' style='left:6px;top:163px;width:102px;height:26px;background:#fff;border:1px solid #d0d0d0'></div><div class='t' style='left:13.30px;top:171.00px;font:normal normal 12.6px "Liberation Sans",sans-serif;line-height:1;color:#333;'>B4</div><div class='dd' style='left:93.5px;top:174px;border-top-color:#6a6a6a;border-left-width:4px;border-right-width:4px;border-top-width:4px'></div><div class='a' style='left:122.5px;top:170px;width:1.6px;height:1.6px;background:#aaa'></div><div class='a' style='left:122.5px;top:174.5px;width:1.6px;height:1.6px;background:#aaa'></div><div class='a' style='left:122.5px;top:179px;width:1.6px;height:1.6px;background:#aaa'></div><div class='a' style='left:138px;top:163px;width:110px;height:26px;background:#fff;border:1px solid #d0d0d0'></div><svg style='left:151px;top:171px' width='10' height='10' viewBox='0 0 10 10'><path d='M0.5 0.5L9.5 9.5M9.5 0.5L0.5 9.5' stroke='#b4b4b4' stroke-width='1.3'/></svg><div class='t' style='left:226.00px;top:171.00px;font:normal normal 12px "Liberation Serif",serif;line-height:1;color:#888;'><i>f</i>x</div><div class='a' style='left:251px;top:163px;width:634px;height:26px;background:#fff;border:1px solid #d0d0d0'></div><div class='t' style='left:263.30px;top:171.00px;font:normal normal 12.6px "Liberation Sans",sans-serif;line-height:1;color:#333;'>№</div><svg style='left:872.5px;top:172.5px' width='8' height='6' viewBox='0 0 8 6'><path d='M0.8 1L4 4.3L7.2 1' fill='none' stroke='#5a5a5a' stroke-width='2'/></svg><div class='a' style='left:0;top:60px;width:891px;height:92px;background:#f1f1f1;border-bottom:1px solid #d6d6d6'></div><div class='rsep' style='left:57px'></div><div class='rsep' style='left:142px'></div><div class='rsep' style='left:215px'></div><div class='rsep' style='left:492px'></div><div class='rsep' style='left:544px'></div><div class='rsep' style='left:621px'></div><div class='rsep' style='left:678px'></div><div class='rsep' style='left:728px'></div><div class='rsep' style='left:772px'></div><div class='rsep' style='left:832px'></div><div class='ibox' style='left:13px'></div><div class='t' style='left:6.00px;top:101.00px;font:normal normal 12.6px "Liberation Sans",sans-serif;line-height:1;color:#444;letter-spacing:-0.706px;'>Таблицы</div><div class='dd' style='left:26.0px;top:120.8px;border-top-color:#777'></div><div class='ibox' style='left:84px'></div><div class='t' style='left:61.50px;top:101.00px;font:normal normal 12.6px "Liberation Sans",sans-serif;line-height:1;color:#444;letter-spacing:-0.376px;'>Иллюстрации</div><div class='dd' style='left:97.0px;top:120.8px;border-top-color:#777'></div><div class='ibox' style='left:163px'></div><div class='t' style='left:146.80px;top:101.00px;font:normal normal 12.6px "Liberation Sans",sans-serif;line-height:1;color:#444;letter-spacing:-0.490px;'>Надстройки</div><div class='dd' style='left:175.5px;top:120.8px;border-top-color:#777'></div><svg style='left:21px;top:71px' width='16' height='16' viewBox='0 0 16 16'><rect x='0.5' y='3.5' width='15' height='12' fill='#fff' stroke='#686868'/><path d='M1 6.9H15M1 9.9H15M1 12.8H15M5.5 4V15.5M10.5 4V15.5' stroke='#a8a8a8' stroke-width='1'/><rect x='0' y='0' width='16' height='4.1' fill='#3d70b5'/><path d='M2 1.7h2.3M6.9 1.7h2.3M11.9 1.7h2.3' stroke='#fff' stroke-width='0.9'/></svg><svg style='left:92px;top:71px' width='17' height='16' viewBox='0 0 17 16'><path d='M6 3.2H0.6V11.2H4.6' fill='none' stroke='#3f78c4' stroke-width='1.1'/><path d='M6.4 4.4A5 5 0 1 1 14 10.6' fill='none' stroke='#3f78c4' stroke-width='1.1'/><path d='M9.4 5.6L14 10.2L9.4 14.8L4.8 10.2Z' fill='#fcfcfc' stroke='#3f78c4' stroke-width='1.1'/></svg><svg style='left:171px;top:71px' width='16' height='16' viewBox='0 0 16 16'><path d='M8.9 1L15.1 4.1V11.9L8.9 14.9L3 11.9V4.1Z' fill='#0a6fcc'/><circle cx='4' cy='11.4' r='3.4' fill='#0a6fcc' stroke='#fcfcfc' stroke-width='1'/></svg><svg style='left:254px;top:68px' width='30' height='31' viewBox='0 0 30 31'><rect x='1' y='9' width='7' height='17.9' fill='#4a7ebb'/><rect x='9' y='1' width='7' height='25.9' fill='#ecc77d'/><rect x='17.1' y='6' width='6.9' height='20.9' fill='#7a7a7a'/>
<path d='M16.4 15.2C16.2 12.6 18.6 11.7 21.5 11.7C25 11.7 27 13.4 27 15.7C27 19.2 21.7 19.8 21.6 24.9' fill='none' stroke='#f1f1f1' stroke-width='5.6'/><rect x='19' y='25.9' width='5.1' height='4.9' fill='#f1f1f1'/>
<path d='M16.4 15.2C16.2 12.6 18.6 11.7 21.5 11.7C25 11.7 27 13.4 27 15.7C27 19.2 21.7 19.8 21.6 24.9' fill='none' stroke='#3f78b8' stroke-width='3.3'/><rect x='19.8' y='26.7' width='3.5' height='3.3' fill='#3f78b8'/></svg><div class='t' style='left:222.75px;top:103.00px;font:normal normal 12.6px "Liberation Sans",sans-serif;line-height:1;color:#444;letter-spacing:-0.488px;'>Рекомендуемые</div><div class='t' style='left:235.00px;top:120.00px;font:normal normal 12.6px "Liberation Sans",sans-serif;line-height:1;color:#444;letter-spacing:-0.420px;'>диаграммы</div><svg style='left:319px;top:66px' width='16' height='16' viewBox='0 0 16 16'><rect x='0.3' y='6' width='3.6' height='8.8' fill='#4a7ebb'/><rect x='5.2' y='1' width='4' height='13.8' fill='#eac282'/><rect x='10.4' y='4' width='3.8' height='10.8' fill='#737373'/></svg><div class='dd' style='left:337.1px;top:72.89999999999999px;border-top-color:#777'></div><svg style='left:351px;top:66px' width='17' height='17' viewBox='0 0 17 17'><rect x='0' y='0' width='6' height='16' fill='#4a7ebb'/><rect x='7.2' y='0' width='8.8' height='9' fill='#eac282'/><rect x='7.2' y='10' width='4' height='6' fill='#737373'/><rect x='12.2' y='10' width='3.8' height='6' fill='#4a7ebb'/></svg><div class='dd' style='left:370.1px;top:72.89999999999999px;border-top-color:#777'></div><div class='a' style='left:381px;top:63px;width:33px;height:24px;background:#c6c6c6'></div><svg style='left:383px;top:66px' width='17' height='16' viewBox='0 0 17 16'><rect x='0.8' y='6' width='3.7' height='8.7' fill='#4a7ebb'/><rect x='5' y='1' width='3.5' height='5.4' fill='#4a7ebb'/><rect x='8.9' y='1' width='3.3' height='8.8' fill='#eac282'/><rect x='13' y='9' width='2.9' height='5.7' fill='#737373'/></svg><div class='dd' style='left:402.8px;top:72.89999999999999px;border-top-color:#444'></div><svg style='left:317px;top:88px' width='18' height='16' viewBox='0 0 18 16'><path d='M1 6L3.5 12L6.5 1.5L9.5 12L12.5 4L15 8.5L17 6.5' fill='none' stroke='#4a7ebb' stroke-width='1.3'/><path d='M1 12L4.5 9L8 13L11.5 6.5L15 12.5L17 10' fill='none' stroke='#8a8a8a' stroke-width='1.1'/></svg><div class='dd' style='left:337.1px;top:95.5px;border-top-color:#777'></div><svg style='left:351px;top:89px' width='16' height='16' viewBox='0 0 16 16'><rect x='0.2' y='4.5' width='3.2' height='10.3' fill='#4a7ebb'/><rect x='4.2' y='0.5' width='3.2' height='14.3' fill='#3b6aad'/><rect x='8.2' y='2.5' width='3.2' height='12.3' fill='#4a7ebb'/><rect x='12.2' y='6' width='3.2' height='8.8' fill='#3b6aad'/></svg><div class='dd' style='left:370.1px;top:95.5px;border-top-color:#777'></div><svg style='left:317px;top:111px' width='17' height='17' viewBox='0 0 17 17'><circle cx='8.5' cy='8.6' r='7.6' fill='#4a7ebb'/><path d='M8.5 8.6V1A7.6 7.6 0 0 0 0.9 8.6Z' fill='#eac282' stroke='#f1f1f1' stroke-width='0.7'/><path d='M8.5 8.6H0.9A7.6 7.6 0 0 0 4.2 14.9Z' fill='#737373' stroke='#f1f1f1' stroke-width='0.7'/></svg><div class='dd' style='left:337.1px;top:119.0px;border-top-color:#777'></div><svg style='left:351px;top:112px' width='17' height='16' viewBox='0 0 17 16'><path d='M1.5 0.5V14.5H16.5' fill='none' stroke='#7a7a7a' stroke-width='1.1'/><rect x='4' y='3.5' width='2' height='2' fill='#eac282'/><rect x='9.6' y='2.6' width='2' height='2' fill='#4a7ebb'/><rect x='7.4' y='7' width='2' height='2' fill='#eac282'/><rect x='13.5' y='6.8' width='2' height='2' fill='#4a7ebb'/><rect x='4' y='10' width='2' height='2' fill='#4a7ebb'/><rect x='11.4' y='9.8' width='2' height='2' fill='#eac282'/></svg><div class='dd' style='left:370.1px;top:119.0px;border-top-color:#777'></div><div class='t' style='left:313.85px;top:138.00px;font:normal normal 12.6px "Liberation Sans",sans-serif;line-height:1;color:#666;letter-spacing:-0.656px;'>Диаграммы</div><svg style='left:437px;top:68px' width='31' height='30' viewBox='0 0 31 30'><rect x='0.3' y='9' width='6.7' height='17' fill='#4a7ebb'/><rect x='8.2' y='1' width='6.8' height='25' fill='#ecc77d'/><rect x='16' y='5.8' width='6.9' height='20' fill='#7a7a7a'/><rect x='14.2' y='14' width='15.6' height='12' fill='#fff' stroke='#666' stroke-width='1.1'/><path d='M16.5 17h2M20 17h7.5' stroke='#bdbdbd' stroke-width='1.6'/></svg><svg style='left:503px;top:67px' width='30' height='32' viewBox='0 0 30 32'>
<path d='M0 6.5L4 5V26H0Z M5 5L8.9 6.5V26H5Z' fill='#4a7ebb'/>
<path d='M10 2.5L14 1V26H10Z M15 1L19 2.5V26H15Z' fill='#ecc77d'/>
<path d='M20.2 6.5L24.2 5V26H20.2Z M25.2 5L28.9 6.5V26H25.2Z' fill='#a0a0a0'/>
<circle cx='14.4' cy='21.8' r='7.4' fill='#f6f6f6' stroke='#555' stroke-width='1.3'/><path d='M14.4 14.4V22M10 16C12 18 12 22 11 24M18.8 16C16.8 18 16.8 22 17.8 24' fill='none' stroke='#666' stroke-width='0.9'/></svg><div class='ibox' style='left:567px'></div><svg style='left:574px;top:70px' width='18' height='17' viewBox='0 0 18 17'><path d='M3.6 1V15.5M0.8 3.4H17M0.8 13.4H17' stroke='#555' stroke-width='1.1' fill='none'/><path d='M4.6 11L7.2 7L9.8 11L12.4 6.2L14.6 9.6L17 7' fill='none' stroke='#4a80c0' stroke-width='1.2'/></svg><div class='t' style='left:546.50px;top:101.00px;font:normal normal 12.6px "Liberation Sans",sans-serif;line-height:1;color:#444;letter-spacing:-0.219px;'>Спарклайны</div><div class='dd' style='left:578.5px;top:120.8px;border-top-color:#777'></div><div class='ibox' style='left:634px'></div><div class='t' style='left:625.40px;top:101.00px;font:normal normal 12.6px "Liberation Sans",sans-serif;line-height:1;color:#444;letter-spacing:-0.327px;'>Фильтры</div><div class='dd' style='left:647.3px;top:120.8px;border-top-color:#777'></div><div class='ibox' style='left:688px'></div><div class='t' style='left:682.90px;top:101.00px;font:normal normal 12.6px "Liberation Sans",sans-serif;line-height:1;color:#444;letter-spacing:-0.569px;'>Ссылки</div><div class='dd' style='left:699.9px;top:120.8px;border-top-color:#777'></div><div class='ibox' style='left:735px'></div><div class='t' style='left:736.70px;top:101.00px;font:normal normal 12.6px "Liberation Sans",sans-serif;line-height:1;color:#444;letter-spacing:-0.705px;'>Текст</div><div class='dd' style='left:746.5px;top:120.8px;border-top-color:#777'></div><div class='ibox' style='left:787px'></div><div class='t' style='left:776.70px;top:101.00px;font:normal normal 12.6px "Liberation Sans",sans-serif;line-height:1;color:#444;letter-spacing:-0.428px;'>Символы</div><div class='dd' style='left:798.7px;top:120.8px;border-top-color:#777'></div><svg style='left:642px;top:71px' width='17' height='16' viewBox='0 0 17 16'><rect x='0.6' y='0.6' width='15.6' height='14.4' fill='#fff' stroke='#555' stroke-width='1.2'/><rect x='0.6' y='0.6' width='15.6' height='2.6' fill='#555'/><path d='M2.6 6.3H8M2.6 9.3H7M2.6 12.3H6' stroke='#3f78c4' stroke-width='1.3'/><path d='M7.6 5.6H15L12.2 9V13.4L10.4 12.2V9Z' fill='#444'/></svg><svg style='left:696px;top:71px' width='17' height='17' viewBox='0 0 17 17'><circle cx='7' cy='6.2' r='5.4' fill='none' stroke='#777' stroke-width='1'/><path d='M1.6 6.2H12.4M7 0.8V11.6M7 0.8C3.6 3.6 3.6 8.8 7 11.6M7 0.8C10.4 3.6 10.4 8.8 7 11.6' fill='none' stroke='#777' stroke-width='0.9'/><rect x='2.6' y='9.8' width='8' height='5.4' rx='2.7' fill='#fafafa' stroke='#2f6fc0' stroke-width='1.7'/><rect x='8.2' y='9.8' width='8' height='5.4' rx='2.7' fill='none' stroke='#2f6fc0' stroke-width='1.7'/></svg><div class='t' style='left:745.08px;top:71.00px;font:italic bold 15px "Liberation Sans",sans-serif;line-height:1;color:#3b78c8;'>A</div><div class='t' style='left:796.39px;top:71.00px;font:normal bold 17px "Liberation Serif",serif;line-height:1;color:#2f6fc0;'>Ω</div><svg style='left:871px;top:141px' width='9' height='6.5' viewBox='0 0 9 6.5'><path d='M0.9 5.6L4.5 1.6L8.1 5.6' fill='none' stroke='#666' stroke-width='2'/></svg><div class='a' style='left:0;top:798px;width:891px;height:28px;background:#e6e6e6;border-top:1px solid #b4b4b4'></div><div class='a' style='left:0;top:826px;width:891px;height:23px;background:#f1f1f1'></div><div class='a' style='left:101px;top:798px;width:61px;height:24px;background:#fff;border-bottom:2px solid #217346'></div><div class='t' style='left:113.00px;top:805.00px;font:normal bold 13px "Liberation Sans",sans-serif;line-height:1;color:#217346;letter-spacing:-0.738px;'>Лист1</div><div class='t' style='left:174.00px;top:805.00px;font:normal normal 13px "Liberation Sans",sans-serif;line-height:1;color:#444;letter-spacing:-0.621px;'>Лист3</div><div class='t' style='left:234.00px;top:805.00px;font:normal normal 13px "Liberation Sans",sans-serif;line-height:1;color:#444;letter-spacing:-0.621px;'>Лист2</div><div class='a' style='left:221px;top:803px;width:1px;height:19px;background:#ababab'></div><div class='a' style='left:280px;top:803px;width:1px;height:19px;background:#ababab'></div><svg style='left:313px;top:803px' width='18' height='18' viewBox='0 0 18 18'><circle cx='9' cy='9' r='7.6' fill='none' stroke='#777' stroke-width='1.1'/><path d='M9 5V13M5 9H13' stroke='#666' stroke-width='1.4'/></svg><div class='a' style='left:534px;top:807px;width:1.6px;height:1.6px;background:#999'></div><div class='a' style='left:534px;top:811.5px;width:1.6px;height:1.6px;background:#999'></div><div class='a' style='left:534px;top:816px;width:1.6px;height:1.6px;background:#999'></div><div class='a' style='left:551px;top:805px;width:15px;height:14px;background:#fff;border:1px solid #ababab'></div><svg style='left:555.5px;top:808px' width='5' height='8'><path d='M4.5 0L0.3 4L4.5 8Z' fill='#555'/></svg><div class='a' style='left:565px;top:805px;width:257px;height:14px;background:#fff;border:1px solid #ababab'></div><div class='a' style='left:822px;top:805px;width:33px;height:14px;background:#d8d8d8'></div><div class='a' style='left:854px;top:805px;width:15px;height:14px;background:#fff;border:1px solid #ababab'></div><svg style='left:859.5px;top:808px' width='5' height='8'><path d='M0.5 0L4.7 4L0.5 8Z' fill='#555'/></svg><div class='a' style='left:873px;top:217px;width:14px;height:567px;background:#d8d8d8'></div><div class='a' style='left:873px;top:200px;width:14px;height:17px;background:#fff;border:1px solid #ababab'></div><svg style='left:876px;top:206px' width='8' height='5'><path d='M0 4.7L4 0.4L8 4.7Z' fill='#555'/></svg><div class='a' style='left:873px;top:216px;width:14px;height:545px;background:#fff;border:1px solid #ababab'></div><div class='a' style='left:873px;top:785px;width:14px;height:14px;background:#fff;border:1px solid #ababab'></div><svg style='left:876px;top:790px' width='8' height='5'><path d='M0 0.3L4 4.6L8 0.3Z' fill='#555'/></svg><div class='t' style='left:8.40px;top:831.00px;font:normal normal 12.4px "Liberation Sans",sans-serif;line-height:1;color:#444;letter-spacing:-0.453px;'>Готово</div><svg style='left:65px;top:830px' width='14' height='13' viewBox='0 0 14 13'><rect x='0.5' y='3.5' width='12.5' height='9' fill='#fff' stroke='#666' stroke-width='1'/><path d='M0.5 6.5H13M0.5 9.5H13M4.6 3.5V12.5M8.8 3.5V12.5' stroke='#777' stroke-width='0.9'/><circle cx='3' cy='3' r='2.8' fill='#555'/></svg><div class='t' style='left:285.00px;top:831.00px;font:normal normal 12.4px "Liberation Sans",sans-serif;line-height:1;color:#444;letter-spacing:-0.825px;'>Среднее: 18,84</div><div class='t' style='left:414.00px;top:831.00px;font:normal normal 12.4px "Liberation Sans",sans-serif;line-height:1;color:#444;letter-spacing:-0.478px;'>Количество: 67</div><div class='t' style='left:511.80px;top:831.00px;font:normal normal 12.4px "Liberation Sans",sans-serif;line-height:1;color:#444;letter-spacing:-1.056px;'>Сумма: 942</div><div class='a' style='left:588px;top:826px;width:36px;height:22px;background:#c6c6c6'></div><svg style='left:598.5px;top:829.5px' width='14' height='14' viewBox='0 0 14 14'><rect x='0.5' y='0.5' width='13' height='13' fill='none' stroke='#555'/><path d='M0.5 4.8H13.5M0.5 9.2H13.5M4.8 0.5V13.5M9.2 0.5V13.5' stroke='#555' stroke-width='1'/></svg><svg style='left:637.5px;top:829.5px' width='14' height='14' viewBox='0 0 14 14'><rect x='0.5' y='0.5' width='13' height='13' fill='none' stroke='#555'/><rect x='3.5' y='3.5' width='7' height='7' fill='none' stroke='#555'/><path d='M5 5.8H9M5 8.2H9' stroke='#555' stroke-width='0.9'/></svg><svg style='left:674.5px;top:829.5px' width='14' height='14' viewBox='0 0 14 14'><rect x='0.5' y='0.5' width='13' height='13' fill='none' stroke='#555'/><path d='M4.8 0.5V7.5H9.5V0.5M0.5 7.5H13.5' fill='none' stroke='#555' stroke-width='1'/></svg><div class='a' style='left:705.5px;top:835px;width:6.5px;height:2px;background:#555'></div><div class='a' style='left:716px;top:835.5px;width:99px;height:1px;background:#999'></div><div class='a' style='left:764.5px;top:830.5px;width:3.5px;height:11.5px;background:#555'></div><div class='a' style='left:819.5px;top:835px;width:9px;height:2px;background:#555'></div><div class='a' style='left:823px;top:831.5px;width:2px;height:9px;background:#555'></div><div class='t' style='left:844.50px;top:831.00px;font:normal normal 12.4px "Liberation Sans",sans-serif;line-height:1;color:#444;letter-spacing:-1.801px;'>100%</div><div class='a' style='left:0;top:60px;width:1px;height:789px;background:#217346'></div><div class='a' style='left:1px;top:60px;width:1px;height:789px;background:rgba(33,115,70,0.5)'></div><div class='a' style='left:890px;top:60px;width:1px;height:789px;background:#217346'></div><div class='a' style='left:889px;top:60px;width:1px;height:789px;background:rgba(33,115,70,0.35)'></div><div class='a' style='left:0;top:848px;width:891px;height:1px;background:#217346'></div><div class='a' style='left:381.5px;top:86px;width:231.5px;height:185.7px;background:#fff;border:1px solid #c6c6c6;box-shadow:1px 2px 4px rgba(0,0,0,0.22)'></div><div class='a' style='left:382.5px;top:87px;width:229.5px;height:23px;background:#ececec'></div><div class='t' style='left:393.00px;top:94.00px;font:normal bold 11.8px "Liberation Sans",sans-serif;line-height:1;color:#4a4a4a;letter-spacing:-0.325px;'>Каскадная</div><div class='a' style='left:383px;top:110px;width:56px;height:50px;background:#c6c6c6'></div><svg style='left:383px;top:110px' width='56' height='50' viewBox='0 0 56 50'>
<rect x='32' y='12' width='6.5' height='34' fill='#cccccc'/>
<path d='M8.5 10V46.5H50' stroke='#777' stroke-width='1' fill='none'/>
<rect x='10.9' y='19.6' width='5.4' height='26.8' fill='#fff' stroke='#777' stroke-width='1'/>
<rect x='18.3' y='19.2' width='5.4' height='5.3' fill='#7d7d7d'/>
<rect x='25' y='24.4' width='6.2' height='7.1' fill='#7d7d7d'/>
<rect x='39.2' y='12.6' width='6.4' height='33.8' fill='#fff' stroke='#777' stroke-width='1'/>
</svg><div class='a' style='left:383px;top:166px;width:229px;height:22px;background:#ececec'></div><div class='t' style='left:392.70px;top:172.00px;font:normal bold 11.8px "Liberation Sans",sans-serif;line-height:1;color:#4a4a4a;letter-spacing:-0.013px;'>Биржевая</div><svg style='left:388px;top:195px' width='30' height='42' viewBox='0 0 30 42'><path d='M3.5 2V38.5H26' fill='none' stroke='#777' stroke-width='1'/><path d='M7.8 20V38M7.8 28.5H9.6M15.7 16V31.5M15.7 23.6H17.5' stroke='#666' stroke-width='1' fill='none'/></svg><div class='a' style='left:383px;top:244px;width:229px;height:1px;background:#e1e1e1'></div><svg style='left:387px;top:250px' width='17' height='16' viewBox='0 0 17 16'><path d='M1 0.5V14.5H16' fill='none' stroke='#666' stroke-width='1'/><path d='M3.6 14V5.5H6V14M8 14V8.5H10.4V14M12.2 14V4H14.6V14' fill='none' stroke='#666' stroke-width='0.9'/><path d='M4.8 5.5V1.5M4.8 2.8H6.3M9.2 8.5V5.4M9.2 6.4H10.6M13.4 4V1.2M13.4 2H15' stroke='#666' stroke-width='0.9'/></svg><div class='a' style='left:409px;top:154px;width:201px;height:218px;background:#fff;border:1px solid #bebebe;box-shadow:1px 2px 4px rgba(0,0,0,0.22)'></div><div class='t' style='left:421.20px;top:163.00px;font:normal bold 11.8px "Liberation Sans",sans-serif;line-height:1;color:#4a4a4a;letter-spacing:-0.250px;'>Каскадная</div><div class='t' style='left:421.20px;top:183.00px;font:normal normal 12px "Liberation Sans",sans-serif;line-height:1;color:#505050;letter-spacing:-0.118px;'>Этот тип диаграммы</div><div class='t' style='left:421.20px;top:198.00px;font:normal normal 12px "Liberation Sans",sans-serif;line-height:1;color:#505050;letter-spacing:-0.090px;'>используется:</div><div class='t' style='left:421.20px;top:213.00px;font:normal normal 12px "Liberation Sans",sans-serif;line-height:1;color:#505050;letter-spacing:-0.099px;'>• для отображения</div><div class='t' style='left:421.20px;top:228.00px;font:normal normal 12px "Liberation Sans",sans-serif;line-height:1;color:#505050;letter-spacing:-0.127px;'>накопительного эффекта для</div><div class='t' style='left:421.20px;top:242.00px;font:normal normal 12px "Liberation Sans",sans-serif;line-height:1;color:#505050;letter-spacing:-0.055px;'>ряда положительных и</div><div class='t' style='left:421.20px;top:257.00px;font:normal normal 12px "Liberation Sans",sans-serif;line-height:1;color:#505050;letter-spacing:-0.062px;'>отрицательных значений.</div><div class='t' style='left:421.20px;top:287.00px;font:normal normal 12px "Liberation Sans",sans-serif;line-height:1;color:#505050;letter-spacing:-0.214px;'>Применяется в случаях:</div><div class='t' style='left:421.20px;top:302.00px;font:normal normal 12px "Liberation Sans",sans-serif;line-height:1;color:#505050;letter-spacing:-0.220px;'>• когда данные делятся на</div><div class='t' style='left:421.20px;top:317.00px;font:normal normal 12px "Liberation Sans",sans-serif;line-height:1;color:#505050;letter-spacing:-0.132px;'>входящие и исходящие</div><div class='t' style='left:421.20px;top:332.00px;font:normal normal 12px "Liberation Sans",sans-serif;line-height:1;color:#505050;letter-spacing:-0.022px;'>(например, финансовые</div><div class='t' style='left:421.20px;top:347.00px;font:normal normal 12px "Liberation Sans",sans-serif;line-height:1;color:#505050;letter-spacing:-0.295px;'>данные).</div><svg style='left:0;top:0' width='891' height='849' viewBox='0 0 891 849'>
<defs><filter id='sh' x='-20%' y='-20%' width='140%' height='140%'><feGaussianBlur in='SourceAlpha' stdDeviation='2.2'/><feOffset dx='1' dy='2.5'/><feComponentTransfer><feFuncA type='linear' slope='0.45'/></feComponentTransfer><feMerge><feMergeNode/><feMergeNode in='SourceGraphic'/></feMerge></filter></defs>
<g filter='url(#sh)'>
<path d='M226 141.5L353.3 81.3L350.3 74.8L382.6 75.2L363.4 100.5L359.5 94.2L230 153Z' fill='#f84040'/>
<path d='M310 209L375 156.9L367.6 152L399.8 143.2L386.6 172.6L381.1 166.3L318 219Z' fill='#f84040'/>
</g>
<g filter='url(#sh)'>
<circle cx='199.3' cy='154' r='37.3' fill='#08ae8e'/>
<circle cx='296.6' cy='235.5' r='37.5' fill='#08ae8e'/>
</g>
</svg><svg style='left:0;top:0' width='891' height='849' viewBox='0 0 891 849'><path d='M199 173.7V144.1Q193.5 147.5 189.5 149L189.1 143.7Q196 141 200.4 134.9H204.7V173.7Z' fill='#fff'/></svg><div class='t' style='left:280.22px;top:209.00px;font:normal normal 56px "Liberation Sans",sans-serif;line-height:1;color:#fff;'>2</div><svg style='left:0;top:0' width='891' height='849' viewBox='0 0 891 849'>
<rect x='22.6' y='771' width='65' height='52' rx='6' fill='#ffffff' fill-opacity='0.5' stroke='#b0b0b0' stroke-opacity='0.85' stroke-width='1'/>
<rect x='26.6' y='775' width='57' height='43' rx='4' fill='none' stroke='#c2c2c2' stroke-opacity='0.92' stroke-width='3'/>
<rect x='43.5' y='823.5' width='20' height='4' rx='1.5' fill='#f6f6f6' stroke='#bdbdbd' stroke-width='0.9'/>
<path d='M31.5 779L45.8 783.8L41.3 786.9L55 801.5A1.5 1.5 0 0 1 52.8 803.6L39 789L36.3 793.4Z' fill='#bcbcbc'/>
<path d='M31.5 808.3V814.5L27.7 811.4Z M57.2 808.3V814.5L61 811.4Z' fill='#d6d6d6'/>
</svg><div class='t' style='left:96.20px;top:781.00px;font:normal bold 32.7px "Liberation Sans",sans-serif;line-height:1;color:rgba(250,160,174,0.78);transform-origin:0 0;transform:scaleX(1.1157);-webkit-text-stroke:1.5px rgba(250,165,178,0.7);'>OS</div><div class='t' style='left:161.80px;top:781.00px;font:normal bold 32.7px "Liberation Sans",sans-serif;line-height:1;color:rgba(253,253,253,0.82);transform-origin:0 0;transform:scaleX(1.2090);-webkit-text-stroke:1.1px rgba(160,160,160,0.75);text-shadow:0.5px 1px 1px rgba(120,120,120,0.3);'>Helper</div></body></html>
